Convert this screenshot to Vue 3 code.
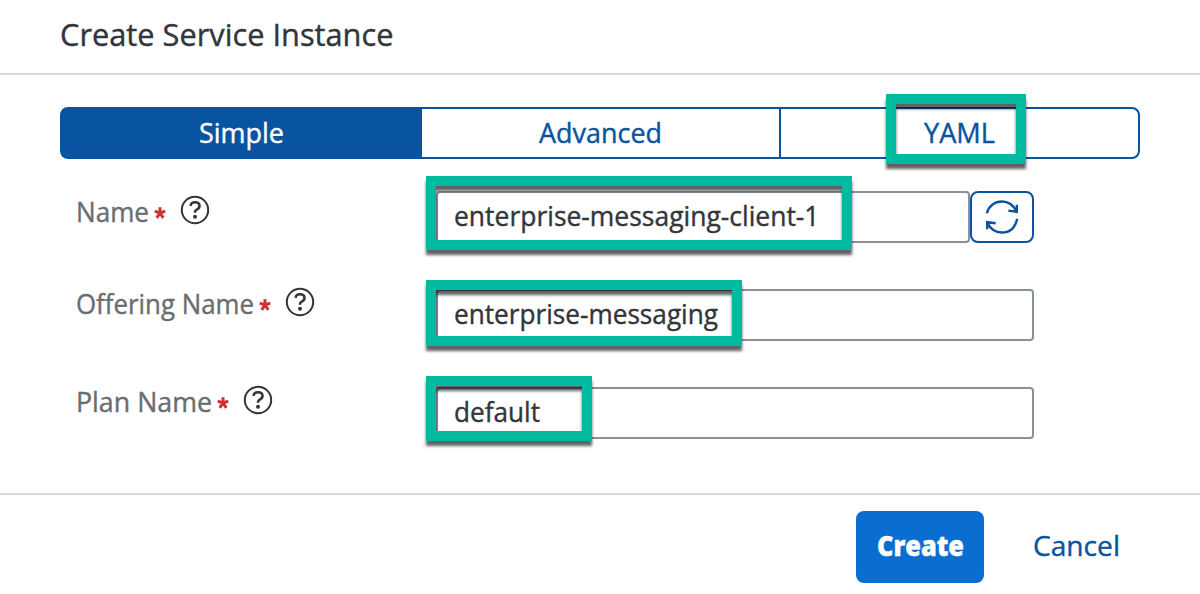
<script setup>
import { h } from 'vue'

// One line of text fitted to a fixed advance width.
const FitText = ({ text, width, size = 28, weight = 400 }) =>
  h('svg', { width, height: 40, style: { display: 'block', overflow: 'visible' } }, [
    h('text', {
      x: 0,
      y: 30,
      fill: 'currentColor',
      stroke: 'currentColor',
      'stroke-width': 0.4,
      'font-size': size,
      'font-weight': weight,
      textLength: width,
      lengthAdjust: 'spacingAndGlyphs'
    }, text)
  ])
FitText.props = ['text', 'width', 'size', 'weight']

const tabs = [
  { text: 'Simple', width: 85, active: true },
  { text: 'Advanced', width: 123 },
  { text: 'YAML', width: 71, marked: true }
]

const fields = [
  { key: 'name', label: 'Name', labelWidth: 73, value: 'enterprise-messaging-client-1', valueWidth: 365.5, refresh: true },
  { key: 'offering', label: 'Offering Name', labelWidth: 178, value: 'enterprise-messaging', valueWidth: 264 },
  { key: 'plan', label: 'Plan Name', labelWidth: 136, value: 'default', valueWidth: 86 }
]
</script>

<template>
  <main class="dialog">
    <header class="header">
      <FitText text="Create Service Instance" :width="333.5" :size="31" />
    </header>

    <section class="content">
      <nav class="tabs">
        <div v-for="tab in tabs" :key="tab.text" class="tab" :class="{ active: tab.active }">
          <FitText :text="tab.text" :width="tab.width" />
          <span v-if="tab.marked" class="marker marker-tab"></span>
        </div>
      </nav>

      <div v-for="field in fields" :key="field.key" class="row" :class="field.key">
        <div class="label">
          <FitText :text="field.label" :width="field.labelWidth" />
          <svg class="star" width="12" height="12" viewBox="0 0 12 12">
            <path d="M6 6V.3M6 6 .7 4.2M6 6l5.3-1.8M6 6l-3.3 4.8M6 6l3.3 4.8" />
          </svg>
          <svg class="help" width="30" height="30" viewBox="0 0 30 30">
            <circle cx="15" cy="15" r="13.2" />
            <path d="M10.6 10.8c.2-2.3 2-3.5 4.4-3.5 2.700 0 4.500 1.400 4.500 3.700 0 1.900-1.200 2.900-2.700 3.600-1.400.7-1.800 1.200-1.800 2.500v.6" />
            <circle class="dot" cx="15" cy="21.7" r="2" />
          </svg>
        </div>
        <div class="control">
          <div class="input">
            <FitText :text="field.value" :width="field.valueWidth" />
          </div>
          <button v-if="field.refresh" class="refresh" aria-label="Refresh">
            <svg width="36" height="36" viewBox="0 0 36 36">
              <path d="M2.800 14.300C4.800 7 10.500 2.500 18 2.500c6.500 0 11.600 3.700 14.800 10.300M32.800 5.800v7l-8.500-1.200M33.200 19.700C31.200 28.500 25.700 33.500 18 33.500 11.500 33.500 6.200 29.800 3.200 23.200M3.200 30.200v-7l8.500 1" />
            </svg>
          </button>
          <span class="marker"></span>
        </div>
      </div>
    </section>

    <footer class="footer">
      <button class="create"><FitText text="Create" :width="87" :weight="800" /></button>
      <button class="cancel"><FitText text="Cancel" :width="87" /></button>
    </footer>
  </main>
</template>

<style>
body {
  background: #fff;
}
</style>

<style scoped>
.dialog {
  display: flex;
  flex-direction: column;
  box-sizing: border-box;
  width: 1200px;
  height: 594px;
  overflow: hidden;
  background: #fff;
  color: #32363a;
  font-family: "Open Sans", "Noto Sans", sans-serif;
}
.header {
  box-sizing: border-box;
  height: 75px;
  padding: 16px 0 0 60px;
  border-bottom: 2px solid #d9d9d9;
}
.content {
  box-sizing: border-box;
  height: 418px;
  padding: 32px 60px 0;
}
.tabs {
  display: grid;
  grid-template-columns: 360px 357px 1fr;
  box-sizing: border-box;
  height: 52px;
  border: 2px solid #0854a0;
  border-radius: 8px;
  color: #0854a0;
}
.tab {
  position: relative;
  display: flex;
  justify-content: center;
  padding-top: 4px;
}
.tab + .tab + .tab {
  border-left: 2px solid #0854a0;
}
.tab.active {
  padding-right: 2px;
  background: #0854a0;
  color: #fff;
}
.row {
  display: flex;
  height: 52px;
}
.row.name {
  margin-top: 32px;
}
.row.offering,
.row.plan {
  margin-top: 46px;
}
.label {
  display: flex;
  align-items: flex-start;
  box-sizing: border-box;
  width: 376px;
  padding: 1px 0 0 15.500px;
  color: #6a6d70;
}
.offering .label,
.plan .label {
  padding-top: 0;
}
.row.offering .label {
  margin-top: -5px;
}
.row.plan .label {
  margin-top: -5px;
}
.star {
  margin: 14.500px 0 0 5.300px;
  fill: none;
  stroke: #cc3432;
  stroke-width: 3;
}
.help {
  margin: 2.500px 0 0 14.300px;
  fill: none;
  stroke: #32363a;
  stroke-width: 2;
}
.help path {
  stroke-width: 2.600;
}
.help .dot {
  fill: #32363a;
  stroke: none;
}
.control {
  position: relative;
  display: flex;
  width: 598px;
}
.input {
  box-sizing: border-box;
  flex: 1;
  padding: 3px 0 0 15.500px;
  border: 2px solid #89919a;
  border-radius: 4px;
}
.refresh {
  display: grid;
  place-items: center;
  box-sizing: border-box;
  width: 64px;
  padding: 0;
  border: 2px solid #0854a0;
  border-radius: 8px;
  background: #fff;
}
.refresh svg {
  fill: none;
  stroke: #0854a0;
  stroke-width: 2.400;
}
.marker {
  position: absolute;
  left: -10px;
  box-sizing: border-box;
  border: 10px solid #00bba0;
  filter: drop-shadow(0 5px 1.500px rgba(0, 0, 0, 0.62));
}
.marker-tab {
  top: -15px;
  left: 105px;
  width: 140px;
  height: 70px;
}
.name .marker {
  top: -15px;
  width: 426px;
  height: 74px;
}
.offering .marker {
  top: -9px;
  width: 316px;
  height: 66px;
}
.plan .marker {
  top: -11px;
  width: 166px;
  height: 65px;
}
.footer {
  display: flex;
  justify-content: flex-end;
  box-sizing: border-box;
  height: 101px;
  padding: 16px 60px 0 0;
  border-top: 2px solid #d9d9d9;
}
.create,
.cancel {
  display: flex;
  justify-content: center;
  box-sizing: border-box;
  height: 72px;
  padding: 15px 0 0;
  border: 0;
  border-radius: 8px;
  font-family: inherit;
}
.create {
  width: 128px;
  background: #0a6ed1;
  color: #fff;
}
.cancel {
  width: 128px;
  margin: 0 0 0 28px;
  background: transparent;
  color: #0854a0;
}
</style>
